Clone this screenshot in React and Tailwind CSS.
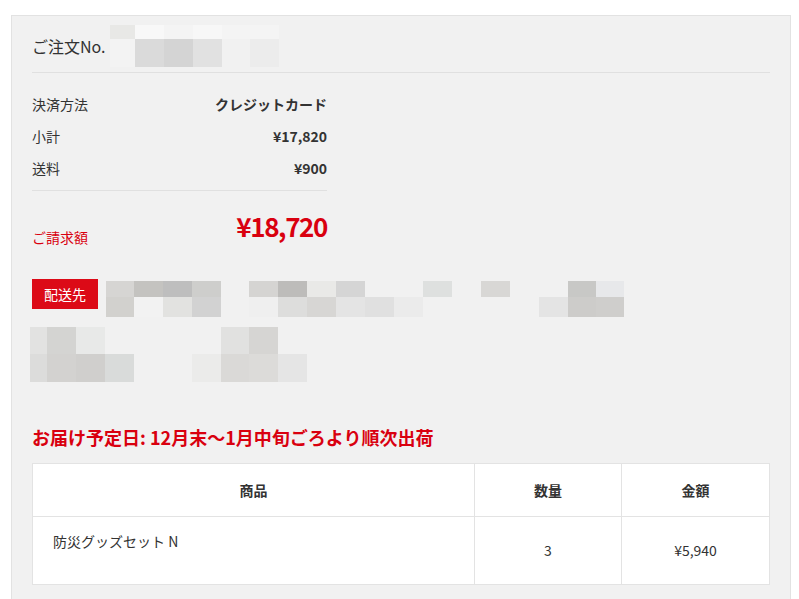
import React from "react";

const headerMosaic = {
  widths: ["w-[25px]", "w-[29px]", "w-[29px]", "w-[29px]", "w-[28px]", "w-[29px]"],
  rows: [
    { h: "h-[14px]", c: ["bg-[#e8e8e6]", "bg-[#f8f8f8]", "bg-[#f4f4f4]", "bg-[#f7f7f7]", "bg-[#f4f4f4]", "bg-[#f4f4f4]"] },
    { h: "h-[28px]", c: ["bg-[#f3f3f3]", "bg-[#dadada]", "bg-[#d4d4d4]", "bg-[#e1e1e1]", "bg-[#f1f1f1]", "bg-[#ececec]"] },
  ],
};

const addrMosaic = {
  widths: [
    "w-[28px]", "w-[29px]", "w-[29px]", "w-[29px]", "w-[28px]", "w-[29px]", "w-[29px]", "w-[29px]", "w-[29px]",
    "w-[29px]", "w-[29px]", "w-[29px]", "w-[29px]", "w-[29px]", "w-[29px]", "w-[29px]", "w-[28px]", "w-[28px]",
  ],
  rows: [
    {
      h: "h-[16px]",
      c: [
        "bg-[#d6d5d3]", "bg-[#c4c3c0]", "bg-[#bebebe]", "bg-[#cececc]", "", "bg-[#d5d4d2]", "bg-[#bdbcba]", "bg-[#e9e9e7]", "bg-[#d5d5d5]",
        "", "", "bg-[#dee0df]", "", "bg-[#d8d7d5]", "", "", "bg-[#c8c8c6]", "bg-[#e7e8ea]",
      ],
    },
    {
      h: "h-[20px]",
      c: [
        "bg-[#d2d1ce]", "bg-[#f2f2f2]", "bg-[#e2e2e0]", "bg-[#d2d2d2]", "", "bg-[#efefef]", "bg-[#dddddc]", "bg-[#d7d6d4]", "bg-[#e4e4e4]",
        "bg-[#e0e0e0]", "bg-[#ebebeb]", "", "", "", "", "bg-[#e4e4e4]", "bg-[#cdccca]", "bg-[#cfcecc]",
      ],
    },
  ],
};

const addrMosaic2 = {
  widths: ["w-[17px]", "w-[29px]", "w-[29px]", "w-[29px]", "w-[29px]", "w-[29px]", "w-[29px]", "w-[28px]", "w-[29px]", "w-[29px]"],
  rows: [
    { h: "h-[27px]", c: ["bg-[#e2e2e1]", "bg-[#d4d4d2]", "bg-[#e8e9e8]", "", "", "", "", "bg-[#e1e1e0]", "bg-[#d6d5d3]", ""] },
    { h: "h-[28px]", c: ["bg-[#dcdcdb]", "bg-[#d3d2d0]", "bg-[#d0cfcd]", "bg-[#d9dbda]", "", "", "bg-[#ebebea]", "bg-[#dad9d7]", "bg-[#dcdbd9]", "bg-[#e5e5e5]"] },
  ],
};

function Mosaic({ data, className = "" }) {
  return (
    <div className={"flex flex-col shrink-0 " + className}>
      {data.rows.map((row, ri) => (
        <div key={ri} className={"flex " + row.h}>
          {row.c.map((c, ci) => (
            <div key={ci} className={data.widths[ci] + " h-full " + c} />
          ))}
        </div>
      ))}
    </div>
  );
}

function Row({ label, value }) {
  return (
    <div className="flex h-[32px] items-center justify-between">
      <span className="text-[14px] text-[#333]">{label}</span>
      <span className="text-[14px] font-bold text-[#333]">{value}</span>
    </div>
  );
}

export default function App() {
  return (
    <div className="min-h-[599px] bg-white pt-[15px] pl-[11px] font-['Noto_Sans_CJK_JP',sans-serif] text-[#333]">
      <div className="w-[780px] border border-[#e2e2e2] bg-[#f1f1f1] px-[20px] pb-[60px]">
        {/* header */}
        <div className="flex items-center border-b border-[#e0e0e0] pt-[9px] pb-[5px]">
          <div className="flex h-[42px] items-center">
            <span className="text-[16px] leading-[24px] text-[#333]">ご注文No.</span>
            <Mosaic data={headerMosaic} className="ml-[4px]" />
          </div>
        </div>

        {/* summary */}
        <div className="w-[295px]">
          <div className="border-b border-[#e0e0e0] pt-[15px] pb-[6px]">
            <Row label="決済方法" value="クレジットカード" />
            <Row label="小計" value="¥17,820" />
            <Row label="送料" value="¥900" />
          </div>
          <div className="flex items-end justify-between pt-[17px]">
            <span className="text-[14px] leading-[20px] text-[#d9000f]">ご請求額</span>
            <span className="mb-[3px] text-[26px] font-bold leading-[36px] tracking-[-1.4px] text-[#d9000f]">¥18,720</span>
          </div>
        </div>

        {/* shipping address */}
        <div className="mt-[32px] flex items-start">
          <div className="flex h-[30px] w-[66px] items-center justify-center bg-[#dc0a17] text-[14px] text-white">
            配送先
          </div>
          <Mosaic data={addrMosaic} className="ml-[8px] mt-[2px]" />
        </div>
        <Mosaic data={addrMosaic2} className="-ml-[2px] mt-[10px]" />

        {/* delivery */}
        <h2 className="mt-[42px] text-[18px] font-bold leading-[26px] text-[#d9000f]">
          お届け予定日: 12月末〜1月中旬ごろより順次出荷
        </h2>

        <table className="mt-[13px] w-[738px] border-collapse bg-white text-[14px]">
          <thead>
            <tr className="h-[53px]">
              <th className="w-[442px] border border-[#e3e3e3] font-bold text-[#333]">商品</th>
              <th className="w-[147px] border border-[#e3e3e3] font-bold text-[#333]">数量</th>
              <th className="w-[148px] border border-[#e3e3e3] font-bold text-[#333]">金額</th>
            </tr>
          </thead>
          <tbody>
            <tr className="h-[68px]">
              <td className="border border-[#e3e3e3] px-[20px] pt-[14px] pb-[32px] align-top leading-[20px] text-[#333]">
                防災グッズセット N
              </td>
              <td className="border border-[#e3e3e3] text-center align-middle text-[#333]">3</td>
              <td className="border border-[#e3e3e3] text-center align-middle text-[#333]">¥5,940</td>
            </tr>
          </tbody>
        </table>
      </div>
    </div>
  );
}
